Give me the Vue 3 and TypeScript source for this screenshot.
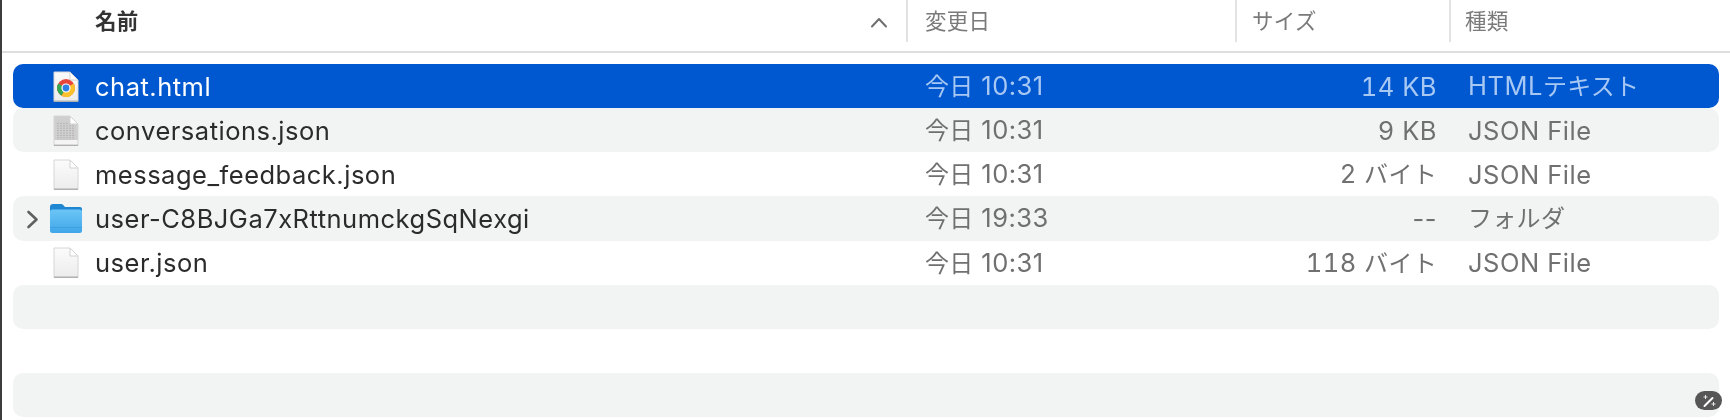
<script setup lang="ts">
type Icon = 'chrome' | 'doc' | 'blank' | 'folder'
interface Row { name: string; date: string; size: string; kind: string; icon: Icon; selected?: boolean; expandable?: boolean }
const rows: Row[] = [
  { name: 'chat.html', date: '今日 10:31', size: '14 KB', kind: 'HTMLテキスト', icon: 'chrome', selected: true },
  { name: 'conversations.json', date: '今日 10:31', size: '9 KB', kind: 'JSON File', icon: 'doc' },
  { name: 'message_feedback.json', date: '今日 10:31', size: '2 バイト', kind: 'JSON File', icon: 'blank' },
  { name: 'user-C8BJGa7xRttnumckgSqNexgi', date: '今日 19:33', size: '--', kind: 'フォルダ', icon: 'folder', expandable: true },
  { name: 'user.json', date: '今日 10:31', size: '118 バイト', kind: 'JSON File', icon: 'blank' },
]
const blanks = [0, 1, 2]
// Japanese runs are set a little smaller than Latin ones, as in the original UI font.
function runs(text: string): { t: string; cjk: boolean }[] {
  return (text.match(/[\u3040-\u30ff\u4e00-\u9fff]+|[^\u3040-\u30ff\u4e00-\u9fff]+/g) ?? []).map((t) => ({
    t,
    cjk: /[\u3040-\u30ff\u4e00-\u9fff]/.test(t),
  }))
}
</script>

<template>
  <div class="window">
    <header class="head">
      <div class="hcell name-head">
        <span>名前</span>
        <svg class="sort" width="18" height="11" viewBox="0 0 18 11"><path d="M2 9.5 L9 2 L16 9.5" fill="none" stroke="#6f6f6f" stroke-width="2" stroke-linecap="round" stroke-linejoin="round"/></svg>
      </div>
      <div class="hcell date-head">変更日</div>
      <div class="hcell size-head">サイズ</div>
      <div class="hcell kind-head">種類</div>
    </header>
    <div class="list">
      <div v-for="r in rows" :key="r.name" class="row" :class="{ selected: r.selected }">
        <div class="lead">
          <svg v-if="r.expandable" class="disc" width="13" height="19" viewBox="0 0 13 19"><path d="M2.5 2 L10.5 9.5 L2.5 17" fill="none" stroke="#5f5f5f" stroke-width="2.6" stroke-linecap="round" stroke-linejoin="round"/></svg>
          <svg v-if="r.icon === 'folder'" class="ic folder" width="34" height="32" viewBox="0 0 34 32">
            <defs><linearGradient id="fg" x1="0" y1="0" x2="0" y2="1"><stop offset="0" stop-color="#6cc6f6"/><stop offset="1" stop-color="#3fa6e8"/></linearGradient></defs>
            <path d="M1 5 a3 3 0 0 1 3-3 h8 a3 3 0 0 1 2.4 1.2 L16 5 h15 a2 2 0 0 1 2 2 v4 H1 Z" fill="#1f87d2"/>
            <rect x="1" y="7.5" width="32" height="23.5" rx="2.5" fill="url(#fg)"/>
            <rect x="1" y="25" width="32" height="1" fill="#2f97dc" opacity=".55"/>
          </svg>
          <svg v-else class="ic" width="28" height="32" viewBox="0 0 28 32">
            <defs><linearGradient id="pg" x1="0" y1="0" x2="0" y2="1"><stop offset="0" stop-color="#fbfbfb"/><stop offset="1" stop-color="#ececec"/></linearGradient></defs>
            <path d="M2 1 H18 L26 9 V30.5 H2 Z" :fill="r.icon === 'doc' ? '#cfcfcf' : 'url(#pg)'" stroke="#d6d6d6" stroke-width="1"/>
            <path d="M2 29.5 H26 V31 H2 Z" fill="#b0b0b0"/>
            <template v-if="r.icon === 'doc'">
              <path v-for="n in 8" :key="n" :d="`M5 ${6 + n * 2.4} H23`" stroke="#b5b5b5" stroke-width="1" stroke-dasharray="2 1"/>
              <rect x="2.5" y="25" width="23" height="4.5" fill="#f4f4f4"/>
            </template>
            <path d="M18 1 V9 H26 Z" fill="#ffffff" stroke="#d2d2d2" stroke-width="1" stroke-linejoin="round"/>
            <g v-if="r.icon === 'chrome'">
              <circle cx="14" cy="17" r="9" fill="#e8453c"/>
              <path d="M14 17 L6.2 12.5 A9 9 0 0 0 9.5 24.8 Z" fill="#34a853"/>
              <path d="M14 17 L21.8 12.5 A9 9 0 0 1 9.5 24.8 Z" fill="#fbc02d"/>
              <circle cx="14" cy="17" r="4.6" fill="#ffffff"/>
              <circle cx="14" cy="17" r="3.4" fill="#2f7fe6"/>
            </g>
          </svg>
        </div>
        <div class="name">{{ r.name }}</div>
        <div class="date"><span v-for="(s, i) in runs(r.date)" :key="i" :class="{ cjk: s.cjk }">{{ s.t }}</span></div>
        <div class="size" :class="{ figures: r.size !== '--' }"><span v-for="(s, i) in runs(r.size)" :key="i" :class="{ cjk: s.cjk }">{{ s.t }}</span></div>
        <div class="kind"><span v-for="(s, i) in runs(r.kind)" :key="i" :class="{ cjk: s.cjk }">{{ s.t }}</span></div>
      </div>
      <div v-for="b in blanks" :key="b" class="row" />
    </div>
    <div class="pill">
      <svg width="14" height="14" viewBox="0 0 14 14">
        <path d="M2.5 12 L10.5 4" stroke="#fff" stroke-width="2" stroke-linecap="round"/>
        <path d="M3.5 1 V5 M1.5 3 H5.5 M11.5 8 V12 M9.5 10 H13.5" stroke="#e8e8e8" stroke-width="1"/>
      </svg>
    </div>
  </div>
</template>

<style scoped>
.window {
  position: relative;
  box-sizing: border-box;
  width: 1730px;
  height: 420px;
  overflow: hidden;
  background: #fff;
  border-left: 2px solid #3d3d3d;
  font-family: Inter, "Noto Sans CJK JP", sans-serif;
  color: #2b2b2b;
  filter: blur(0.35px);
}
.head {
  box-sizing: border-box;
  height: 53px;
  display: grid;
  grid-template-columns: 906px 329px 214px 1fr;
  border-bottom: 2px solid #dedede;
  font-size: 21.5px;
  letter-spacing: 0.3px;
}
.hcell {
  box-sizing: border-box;
  height: 42px;
  padding-top: 6px;
  line-height: 30px;
  color: #7a7a7a;
  border-right: 2px solid #e2e2e2;
}
.name-head {
  display: flex;
  justify-content: space-between;
  padding-left: 93px;
  padding-right: 18px;
  font-weight: 600;
  color: #333;
}
.sort { margin-top: 11px; }
.date-head { padding-left: 17px; }
.size-head { padding-left: 15px; }
.kind-head { padding-left: 14px; border-right: 0; }
.list {
  margin-top: 11px;
  margin-left: 11px;
  width: 1706px;
}
.row {
  box-sizing: border-box;
  height: 44.14px;
  display: grid;
  grid-template-columns: 82px 830px 300px 212px 1fr;
  align-items: center;
  border-radius: 10px;
  font-size: 25.5px;
  letter-spacing: 0.5px;
  line-height: 44px;
  color: #2b2b2b;
}
.row:nth-child(even) { background: #f2f4f4; }
.row.selected {
  background: #0058d0;
  color: #fff;
}
.lead {
  position: relative;
  height: 44px;
  display: flex;
  align-items: center;
}
.disc { position: absolute; left: 13px; top: 13px; }
.ic { position: absolute; left: 39px; top: 6px; }
.folder { left: 36px; top: 5px; }
.name { white-space: nowrap; }
.date, .size, .kind {
  color: #707070;
  white-space: nowrap;
}
.figures { font-feature-settings: "tnum"; }
.cjk { font-size: 24px; letter-spacing: 0.3px; }
.size { text-align: right; }
.kind { padding-left: 31px; }
.selected .date, .selected .size, .selected .kind { color: #a8c8f4; }
.pill {
  position: absolute;
  left: 1693px;
  top: 391px;
  width: 27px;
  height: 19px;
  border-radius: 10px;
  background: #565656;
  display: flex;
  align-items: center;
  justify-content: center;
}
</style>
